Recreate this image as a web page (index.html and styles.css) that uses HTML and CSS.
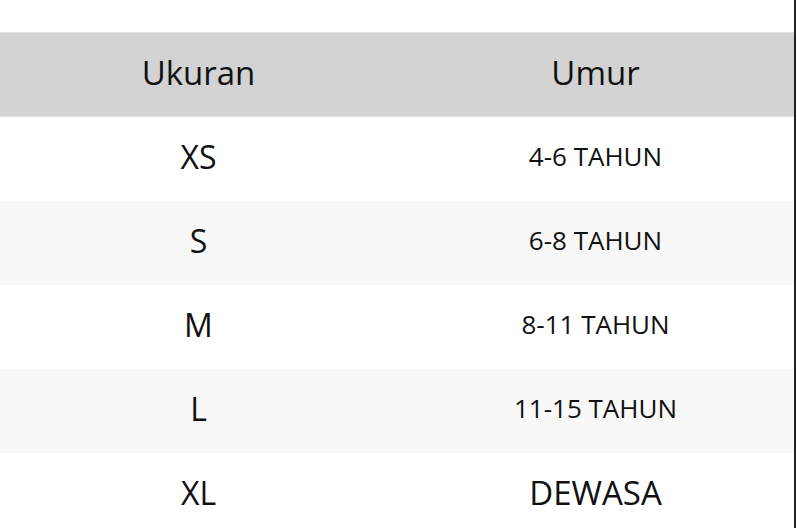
FILE: index.html
```html
<!DOCTYPE html>
<html>
<head>
<meta charset="utf-8">
<link rel="stylesheet" href="styles.css">
</head>
<body>
<div class="page">
  <table class="size-table">
    <thead>
      <tr><th>Ukuran</th><th>Umur</th></tr>
    </thead>
    <tbody>
      <tr><td class="size">XS</td><td class="age">4-6 TAHUN</td></tr>
      <tr><td class="size">S</td><td class="age">6-8 TAHUN</td></tr>
      <tr><td class="size">M</td><td class="age">8-11 TAHUN</td></tr>
      <tr><td class="size">L</td><td class="age">11-15 TAHUN</td></tr>
      <tr><td class="size">XL</td><td class="age big">DEWASA</td></tr>
    </tbody>
  </table>
</div>
</body>
</html>
```
FILE: styles.css
```css
html, body {
  margin: 0;
  padding: 0;
  background: #fff;
  overflow: hidden;
}
.page {
  width: 796px;
  height: 528px;
  padding-top: 32px;
  box-sizing: border-box;
  border-right: 2px solid #222;
  font-family: "Open Sans", sans-serif;
  color: #111;
}
.size-table {
  width: 794px;
  border-collapse: collapse;
  table-layout: fixed;
}
.size-table th {
  height: 84px;
  background: #d3d3d3;
  border-top: 1px solid #e2e2e2;
  border-bottom: 1px solid #e2e2e2;
  font-weight: 400;
  font-size: 33px;
  padding: 0 0 4px;
  box-sizing: border-box;
}
.size-table td {
  height: 84px;
  padding: 0 0 5px;
  box-sizing: border-box;
  text-align: center;
}
.size-table tbody tr:nth-child(even) td {
  background: #f8f8f8;
}
.size { font-size: 32px; }
.age { font-size: 26px; }
.age.big { font-size: 33px; }
```
